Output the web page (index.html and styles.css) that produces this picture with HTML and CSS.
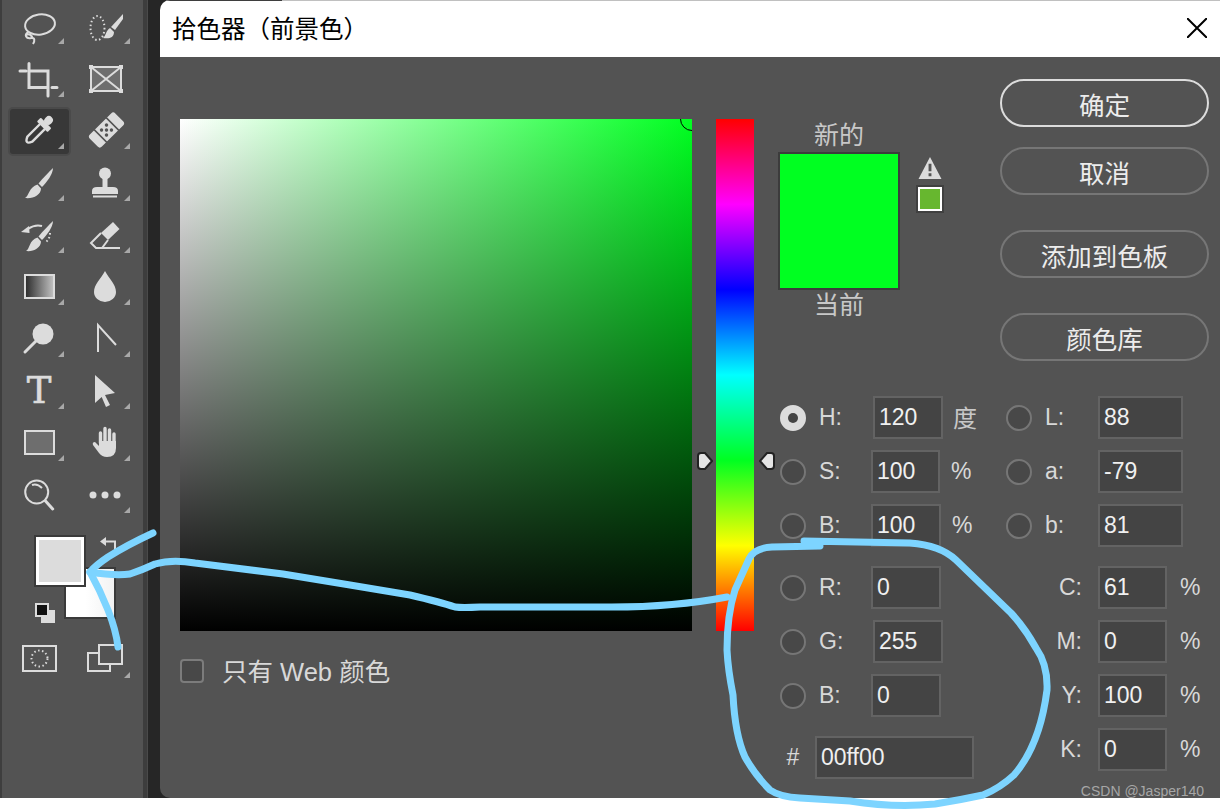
FILE: index.html
```html
<!doctype html>
<html lang="zh-CN">
  <head>
    <meta charset="UTF-8" />
    <title>拾色器（前景色）</title>
    <link rel="stylesheet" href="styles.css">
  </head>
  <body>
    <div class="window">
      <aside class="toolbar">
        <div class="tool-grid">
          <div class="tool has-menu">
            <svg class="icon line" viewBox="0 0 32 32"><ellipse cx="17" cy="10.5" rx="15" ry="10" transform="rotate(-8 17 10.5)"/><path d="M5 18C1 21 3 25 8 24C12 23 12 27 10 30M4 21C6 19 10 22 9 25"/></svg>
          </div>
          <div class="tool has-menu">
            <svg class="icon" viewBox="0 0 32 32"><ellipse class="line-only dotted" cx="8.5" cy="14" rx="7" ry="12"/><path d="M34 0V5L26 16L22 13Z"/><path d="M21 14L25 18C25 24 20 25 14 24C17 22 17 16 21 14Z"/></svg>
          </div>
          <div class="tool has-menu">
            <svg class="icon line thick" viewBox="0 0 32 32"><path d="M6 -.5V23.5H25M6 7H25V32M-3 7H3M29 23.5H34"/></svg>
          </div>
          <div class="tool">
            <svg class="icon" viewBox="0 0 32 32"><rect class="panel" x="2" y="3" width="30" height="24"/><path class="line-only" d="M2 3L32 27M32 3L2 27"/><path d="M0 1h4v4h-4zM30 1h4v4h-4zM0 25h4v4h-4zM30 25h4v4h-4z"/></svg>
          </div>
          <div class="tool has-menu active">
            <svg class="icon" viewBox="0 0 32 32"><g transform="rotate(45 16 16)"><rect x="12" y="-2" width="8" height="9" rx="4"/><rect x="8.500" y="6" width="15" height="5.500" rx="1"/><path class="line-only wide" d="M12.500 11V29Q16 37 19.500 29V11"/></g></svg>
          </div>
          <div class="tool has-menu">
            <svg class="icon" viewBox="0 0 32 32"><g transform="rotate(-45 17.5 16)"><rect x="-.5" y="7.500" width="36" height="17" rx="3"/><path class="cut" d="M9 7V25M26 7V25"/><g class="holes"><circle cx="14" cy="12.500" r="1.700"/><circle cx="21" cy="12.500" r="1.700"/><circle cx="17.500" cy="16" r="1.700"/><circle cx="14" cy="19.500" r="1.700"/><circle cx="21" cy="19.500" r="1.700"/></g></g></svg>
          </div>
          <div class="tool has-menu">
            <svg class="icon" viewBox="0 0 32 32"><path d="M30 2C30 8 24 16 19 21L15.500 17.500C20 12 26 6 30 2Z"/><path d="M14.500 18.500L18 22.500C18 29 10 33 2 32C6 30 6 21 14.500 18.500Z"/></svg>
          </div>
          <div class="tool has-menu">
            <svg class="icon" viewBox="0 0 32 32"><circle cx="16" cy="7.500" r="6"/><rect x="13.500" y="12" width="5" height="9"/><path d="M3 28V25Q3 21 8 21H24Q29 21 29 25V28Z"/><rect x="4" y="29.500" width="24" height="2"/></svg>
          </div>
          <div class="tool has-menu">
            <svg class="icon" viewBox="0 0 32 32"><path d="M30 3C30 9 24 17 19 22L15.500 18.500C20 13 26 7 30 3Z"/><path d="M14.500 19.500L18 23.500C18 30 10 34 3 33C7 31 6 22 14.500 19.500Z"/><path d="M-2 14L6 8L6.500 15Z"/><path class="line-only" d="M5 11Q12 6 19 8"/><path class="line-only dotted" d="M27 15Q27 21 22 25"/></svg>
          </div>
          <div class="tool has-menu">
            <svg class="icon" viewBox="0 0 32 32"><path d="M12 15L24 4L30.500 11L19 22Z"/><path class="line-only" d="M12 15L2 25L7 30H13L19 22M13 30H31"/></svg>
          </div>
          <div class="tool has-menu">
            <svg class="icon" viewBox="0 0 32 32"><defs><linearGradient id="grad-fill"><stop offset="0" stop-color="#2a2a2a"/><stop offset="1" stop-color="#c4c4c4"/></linearGradient></defs><rect x="2" y="5" width="29" height="23" fill="url(#grad-fill)" stroke="#dcdcdc" stroke-width="2"/></svg>
          </div>
          <div class="tool has-menu">
            <svg class="icon" viewBox="0 0 32 32"><path d="M16 1C20 9 27 14 27 22A11 10 0 0 1 5 22C5 14 12 9 16 1Z"/></svg>
          </div>
          <div class="tool has-menu">
            <svg class="icon" viewBox="0 0 32 32"><circle cx="20" cy="12" r="10.500"/><path class="line-only thick" d="M2 30L13 19"/></svg>
          </div>
          <div class="tool has-menu">
            <svg class="icon line" viewBox="0 0 32 32"><path d="M27 23L9 3V30"/></svg>
          </div>
          <div class="tool has-menu"><span class="type-glyph">T</span></div>
          <div class="tool has-menu">
            <svg class="icon" viewBox="0 0 32 32"><path d="M6 1L26 19L16 21L21 31L17 33L12.700 23L6 29Z"/></svg>
          </div>
          <div class="tool has-menu">
            <svg class="icon" viewBox="0 0 32 32"><rect class="panel" x="2" y="5" width="29" height="23"/></svg>
          </div>
          <div class="tool has-menu">
            <svg class="icon" viewBox="0 0 32 32"><path class="finger" d="M11.500 17V7M16 17V2.500M20.500 17V4M25 18V8"/><path d="M10 15H27V22Q27 31 18 31Q13 31 10 27L4 19Q3 16 6 16L10 20Z"/></svg>
          </div>
          <div class="tool">
            <svg class="icon line" viewBox="0 0 32 32"><circle cx="13.700" cy="14" r="11.500"/><path class="thick" d="M22.500 23L29.700 31"/><path d="M9 7Q14 5 19 10"/></svg>
          </div>
          <div class="tool has-menu">
            <svg class="icon" viewBox="0 0 32 32"><circle cx="4" cy="17" r="3.500"/><circle cx="16" cy="17" r="3.500"/><circle cx="28" cy="17" r="3.500"/></svg>
          </div>
        </div>

        <div class="swatches">
          <div class="swatch swatch-bg"></div>
          <div class="swatch swatch-fg"></div>
          <svg class="swap-icon" viewBox="0 0 16 16"><path d="M0 4.500L6 0V9Z"/><path class="line-only" d="M5 4.500H15V15"/></svg>
          <div class="default-colors"><span class="default-back"></span><span class="default-front"></span></div>
        </div>

        <div class="tool-grid modes">
          <div class="tool">
            <svg class="icon line" viewBox="0 0 32 32"><rect x="0" y="3" width="33" height="25"/><circle class="dotted" cx="16.500" cy="15.500" r="8"/></svg>
          </div>
          <div class="tool has-menu">
            <svg class="icon line" viewBox="0 0 32 32"><rect x="-1" y="10" width="22" height="18"/><rect class="panel-flat" x="10" y="2" width="23" height="19"/></svg>
          </div>
        </div>
      </aside>

      <main class="dialog">
        <header class="title-bar">
          <h1 class="title">拾色器（前景色）</h1>
          <svg class="close-icon" viewBox="0 0 20 20"><path d="M0 0L20 20M20 0L0 20"/></svg>
        </header>

        <div class="dialog-body">
          <div class="picker">
            <div class="color-field"><span class="field-marker"></span></div>
            <label class="web-only"><span class="checkbox"></span><span class="web-text">只有 Web 颜色</span></label>
          </div>

          <div class="hue-bar">
            <svg class="hue-handle hue-handle-left" viewBox="0 0 16 18"><path d="M4 1H8L15 9L8 17H4Q1 17 1 14V4Q1 1 4 1Z"/></svg>
            <svg class="hue-handle hue-handle-right" viewBox="0 0 16 18"><path d="M12 1H8L1 9L8 17H12Q15 17 15 14V4Q15 1 12 1Z"/></svg>
          </div>

          <div class="side">
            <div class="side-top">
              <div class="preview">
                <div class="preview-main">
                  <div class="preview-label">新的</div>
                  <div class="preview-color"></div>
                  <div class="preview-label">当前</div>
                </div>
                <div class="gamut">
                  <svg class="warning-icon" viewBox="0 0 24 24"><path fill-rule="evenodd" d="M12 1L24 24H0ZM10.500 8V16H13.500V8ZM10.500 18V21H13.500V18Z"/></svg>
                  <div class="gamut-color"></div>
                </div>
              </div>
              <div class="buttons">
                <button class="btn btn-primary">确定</button>
                <button class="btn">取消</button>
                <button class="btn btn-spaced">添加到色板</button>
                <button class="btn btn-spaced">颜色库</button>
              </div>
            </div>

            <div class="fields">
              <div class="field-col field-col-left">
                <div class="row"><span class="radio checked"></span><span class="label">H:</span><span class="input nudge">120</span><span class="unit unit-cjk">度</span></div>
                <div class="row"><span class="radio"></span><span class="label">S:</span><span class="input narrow">100</span><span class="unit">%</span></div>
                <div class="row"><span class="radio"></span><span class="label">B:</span><span class="input">100</span><span class="unit">%</span></div>
                <div class="row section-start"><span class="radio"></span><span class="label">R:</span><span class="input">0</span></div>
                <div class="row"><span class="radio"></span><span class="label">G:</span><span class="input nudge">255</span></div>
                <div class="row"><span class="radio"></span><span class="label">B:</span><span class="input">0</span></div>
                <div class="row section-start"><span class="hash">#</span><span class="input input-hex">00ff00</span></div>
              </div>
              <div class="field-col">
                <div class="row"><span class="radio"></span><span class="label">L:</span><span class="input input-lab">88</span></div>
                <div class="row"><span class="radio"></span><span class="label">a:</span><span class="input input-lab">-79</span></div>
                <div class="row"><span class="radio"></span><span class="label">b:</span><span class="input input-lab">81</span></div>
                <div class="row section-start"><span class="label label-cmyk">C:</span><span class="input narrow">61</span><span class="unit unit-cmyk">%</span></div>
                <div class="row"><span class="label label-cmyk">M:</span><span class="input narrow">0</span><span class="unit unit-cmyk">%</span></div>
                <div class="row"><span class="label label-cmyk">Y:</span><span class="input narrow">100</span><span class="unit unit-cmyk">%</span></div>
                <div class="row"><span class="label label-cmyk">K:</span><span class="input narrow">0</span><span class="unit unit-cmyk">%</span></div>
              </div>
            </div>
          </div>
        </div>
        <div class="watermark">CSDN @Jasper140</div>
      </main>
    </div>

    <!-- hand drawn marks over the screenshot -->
    <svg class="annotations" viewBox="0 0 1220 811">
      <path d="M153 533Q127 545 108 557Q96 565 90 572"/>
      <path d="M90 572Q100 590 108 610Q116 630 118 647"/>
      <path d="M90 572Q115 576 130 574Q142 570 155 564Q172 559 195 563L283 574L350 585L410 595Q440 602 455 607Q462 608 480 607L600 607Q670 608 727 597"/>
      <path d="M820 546L772 547Q754 548 749 559L735 590Q727 615 727 650Q728 670 733 695Q735 735 745 757Q755 775 770 790Q780 797 800 798L850 801Q894 808 935 804Q960 800 983 795Q1000 788 1014 775Q1040 745 1047 690Q1048 665 1036 648Q1025 628 1011 613L956 560Q940 545 910 543L804 541"/>
    </svg>
  </body>
</html>
```

FILE: styles.css
```css
* {
  margin: 0;
  padding: 0;
  box-sizing: border-box;
}

html,
body {
  height: 811px;
  overflow: hidden;
  background: white;
}

body {
  position: relative;
  font-family: "Liberation Sans", "Noto Sans CJK SC", sans-serif;
  color: #d8d8d8;
}

.window {
  display: flex;
  height: 798px;
  background: #262626;
}

/* toolbar */

.toolbar {
  width: 160px;
  flex-shrink: 0;
  padding: 5px 0 0 6px;
  background: linear-gradient(
    to right,
    #3e3e3e 0 2px,
    #535353 2px 143px,
    #3d3d3d 143px 147px,
    #4a4a4a 147px 148px,
    #262626 148px
  );
}

.tool-grid {
  display: grid;
  grid-template-columns: 66px 66px;
  grid-template-rows: 50px 49px repeat(8, 52px);
}

.tool-grid.modes {
  grid-template-rows: 52px;
  margin-top: 8px;
}

.tool {
  position: relative;
  display: flex;
  align-items: center;
  justify-content: center;
}

.tool.has-menu::after {
  content: "";
  position: absolute;
  right: 8px;
  bottom: 7px;
  width: 6px;
  height: 6px;
  background: #a8a8a8;
  clip-path: polygon(100% 0, 100% 100%, 0 100%);
}

.tool-grid:first-child .tool:nth-child(-n + 2)::after {
  bottom: 11px;
}

.tool.active::before {
  content: "";
  position: absolute;
  inset: 3px 1px 0 2px;
  background: #383838;
  border: 2px solid #4a4a4a;
  border-radius: 5px;
}

.icon {
  position: relative;
  width: 32px;
  height: 32px;
  overflow: visible;
  fill: #dcdcdc;
}

.icon.line,
.line-only {
  fill: none;
  stroke: #dcdcdc;
  stroke-width: 2;
}

.icon.thick,
.icon .thick {
  stroke-width: 3;
  stroke-linecap: round;
}

.icon .wide {
  stroke-width: 2.4;
}

.dotted {
  stroke-dasharray: 1.5 2.5;
}

.panel {
  fill: #6e6e6e;
  stroke: #dcdcdc;
  stroke-width: 2;
}

.panel-flat {
  fill: #535353;
}

.cut {
  fill: none;
  stroke: #535353;
  stroke-width: 1.5;
}

.holes {
  fill: #535353;
}

.finger {
  fill: none;
  stroke: #dcdcdc;
  stroke-width: 3.4;
  stroke-linecap: round;
}

.type-glyph {
  font-family: "DejaVu Serif", serif;
  font-size: 37px;
  line-height: 1;
  color: #dcdcdc;
  -webkit-text-stroke: 0.6px #dcdcdc;
}

.swatches {
  position: relative;
  height: 90px;
  margin-top: 15px;
}

.swatch {
  position: absolute;
  width: 52px;
  height: 52px;
  border: 2px solid #3a3a3a;
}

.swatch-fg {
  left: 28px;
  top: 0;
  background: #dcdcdc;
  box-shadow: inset 0 0 0 3px white;
}

.swatch-bg {
  left: 58px;
  top: 32px;
  background: linear-gradient(to right, white 40%, #f2f2f2);
}

.swap-icon {
  position: absolute;
  left: 94px;
  top: 2px;
  width: 16px;
  height: 16px;
  fill: #dcdcdc;
}

.default-colors {
  position: absolute;
  left: 29px;
  top: 68px;
  width: 20px;
  height: 20px;
}

.default-back {
  position: absolute;
  right: 0;
  bottom: 0;
  width: 14px;
  height: 13px;
  background: #dcdcdc;
}

.default-front {
  position: absolute;
  left: 0;
  top: 0;
  width: 14px;
  height: 14px;
  background: #111;
  border: 2px solid #dcdcdc;
}

/* dialog */

.dialog {
  position: relative;
  flex: 1;
  display: flex;
  flex-direction: column;
  overflow: hidden;
  background: #535353;
  border-radius: 10px 0 0 10px;
}

.title-bar {
  position: relative;
  display: flex;
  align-items: center;
  justify-content: space-between;
  height: 57px;
  padding: 0 13px 0 12px;
  background: white;
  border-top: 1px solid #c0c0c0;
}

.title-bar::before {
  content: "";
  position: absolute;
  left: 0;
  top: -1px;
  width: 122px;
  height: 1px;
  background: #3e3e3e;
}

.title {
  margin-bottom: 4px;
  font-size: 24.500px;
  font-weight: 400;
  color: black;
}

.close-icon {
  width: 20px;
  height: 20px;
  margin-bottom: 2px;
  fill: none;
  stroke: black;
  stroke-width: 2;
}

.dialog-body {
  display: flex;
  flex: 1;
  padding: 22px 0 0 20px;
}

.picker {
  width: 512px;
  margin-top: 40px;
}

.color-field {
  position: relative;
  width: 512px;
  height: 512px;
  overflow: hidden;
  background:
    linear-gradient(to top, #000, transparent),
    linear-gradient(to right, #fff, #00ff21);
}

.field-marker {
  position: absolute;
  top: -12px;
  right: -12px;
  width: 24px;
  height: 24px;
  border: 1.5px solid black;
  border-radius: 50%;
}

.web-only {
  display: flex;
  align-items: center;
  gap: 18px;
  height: 24px;
  margin-top: 28px;
  font-size: 25.500px;
}

.web-text {
  margin-bottom: 3px;
}

.checkbox {
  width: 24px;
  height: 24px;
  background: #484848;
  border: 2px solid #7c7c7c;
  border-radius: 4px;
}

.hue-bar {
  position: relative;
  width: 38px;
  height: 512px;
  margin: 40px 0 0 24px;
  background: linear-gradient(
    to bottom,
    #f00 0%,
    #f0f 16.67%,
    #00f 33.33%,
    #0ff 50%,
    #00ff21 66.67%,
    #ff0 83.33%,
    #f00 100%
  );
}

.hue-handle {
  position: absolute;
  top: 333px;
  width: 16px;
  height: 18px;
  fill: #e4e4e4;
  stroke: #222;
  stroke-width: 2;
}

.hue-handle-left {
  left: -19px;
}

.hue-handle-right {
  right: -21px;
}

.side {
  width: 431px;
  margin-left: 24px;
}

.side-top {
  display: flex;
  justify-content: space-between;
}

.preview {
  display: flex;
  margin-top: 41px;
}

.preview-main {
  width: 122px;
}

.preview-label {
  height: 32px;
  font-size: 25px;
  line-height: 30px;
  text-align: center;
  color: #c8c8c8;
}

.preview-color {
  height: 138px;
  background: #00ff21;
  border: 2px solid #3c3c3c;
}

.gamut {
  display: flex;
  flex-direction: column;
  align-items: center;
  gap: 6px;
  width: 28px;
  margin: 36px 0 0 16px;
}

.warning-icon {
  width: 24px;
  height: 23px;
  fill: #dcdcdc;
}

.gamut-color {
  width: 28px;
  height: 28px;
  background: #67b72f;
  border: 2px solid #404040;
  box-shadow: inset 0 0 0 2px white;
}

.buttons {
  display: flex;
  flex-direction: column;
  gap: 20px;
  width: 209px;
}

.btn {
  height: 48px;
  font-family: inherit;
  font-size: 25.500px;
  color: #ececec;
  background: transparent;
  border: 2px solid #767676;
  border-radius: 24px;
}

.btn-primary {
  border-color: #dcdcdc;
}

.btn-spaced {
  margin-top: 15px;
}

.fields {
  display: flex;
  margin-top: 35px;
}

.field-col-left {
  width: 228px;
  padding-left: 2px;
}

.row {
  display: flex;
  align-items: center;
  height: 43px;
  margin-bottom: 11px;
  font-size: 23px;
}

.row.section-start {
  margin-top: 19px;
}

.radio {
  position: relative;
  width: 26px;
  height: 26px;
  margin-right: 13px;
  background: #484848;
  border: 2px solid #767676;
  border-radius: 50%;
}

.radio.checked {
  background: #dcdcdc;
  border-color: #dcdcdc;
}

.radio.checked::after {
  content: "";
  position: absolute;
  inset: 6px;
  background: #444;
  border-radius: 50%;
}

.label {
  width: 52px;
}

.field-col:not(.field-col-left) .label {
  width: 53px;
}

.field-col .label.label-cmyk {
  width: 76px;
  margin-right: 16px;
  text-align: right;
}

.input {
  display: flex;
  align-items: center;
  width: 70px;
  height: 43px;
  padding-left: 4px;
  color: #f0f0f0;
  background: #444;
  border: 2px solid #636363;
}

.input.nudge {
  margin-left: 2px;
}

.input.narrow {
  width: 69px;
}

.input-lab {
  width: 85px;
}

.input-hex {
  width: 159px;
  margin-left: 9px;
}

.hash {
  width: 26px;
  text-align: center;
}

.unit {
  margin-left: 11px;
}

.unit-cjk {
  margin-bottom: 3px;
  margin-left: 10px;
  font-size: 24px;
  color: #c8c8c8;
}

.unit-cmyk {
  margin-left: 13px;
}

.watermark {
  position: absolute;
  right: 16px;
  bottom: -1px;
  font-size: 14px;
  color: #a6a6a6;
}

/* blue pen strokes */

.annotations {
  position: absolute;
  left: 0;
  top: 0;
  width: 1220px;
  height: 811px;
  fill: none;
  stroke: #7dd4ff;
  stroke-width: 7;
  stroke-linecap: round;
  stroke-linejoin: round;
  pointer-events: none;
}
```
